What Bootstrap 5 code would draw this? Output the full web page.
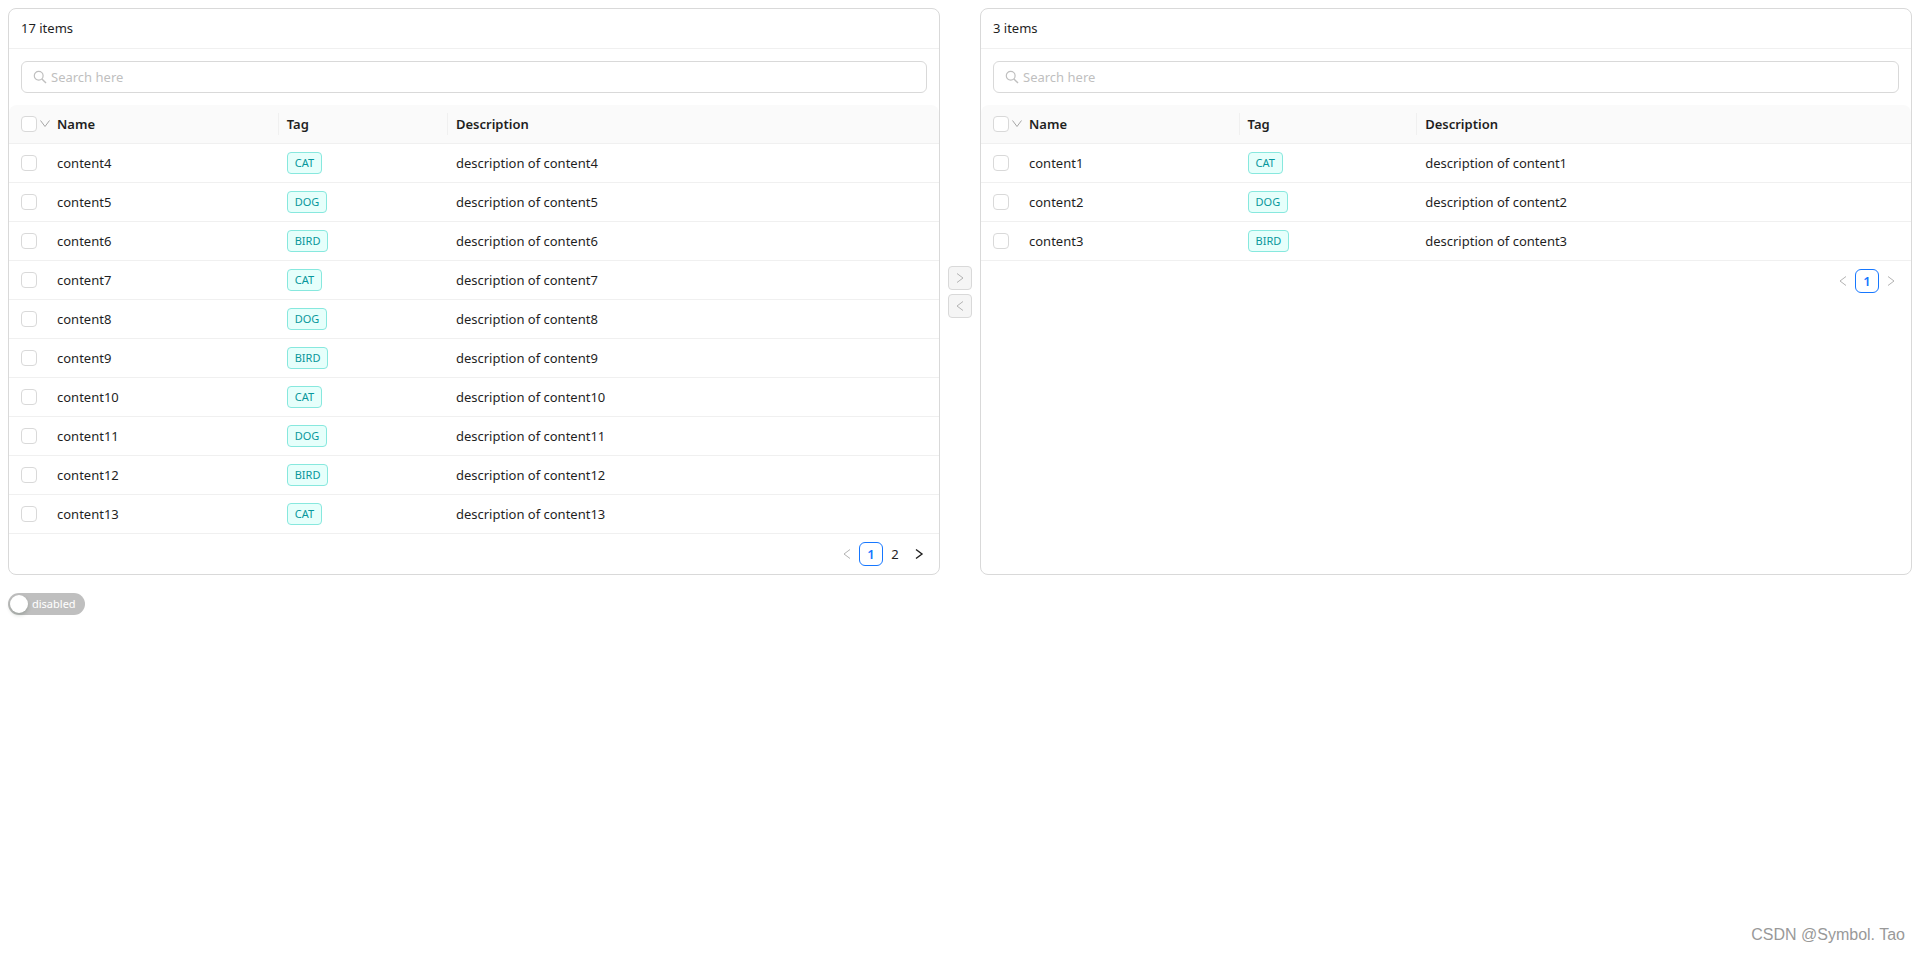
<!DOCTYPE html>
<html lang="en">
<head>
<meta charset="utf-8">
<meta name="viewport" content="width=device-width, initial-scale=1">
<title>Table transfer</title>
<link href="https://cdn.jsdelivr.net/npm/bootstrap@5.3.0/dist/css/bootstrap.min.css" rel="stylesheet">
<style>
  body { font-family: "Noto Sans", "Open Sans", sans-serif; font-size: 13px; line-height: 22px; color: #1f1f1f; background: #fff; }
  .panel { border: 1px solid #d9d9d9; border-radius: 8px; flex: 1 1 0; min-width: 0; }
  .panel-head { padding: 8px 12px 9px; border-bottom: 1px solid #f0f0f0; }
  .search { height: 32px; margin: 12px; padding: 0 11px; gap: 4px; border: 1px solid #d9d9d9; border-radius: 6px; color: #bfbfbf; }
  .search .form-control { font-size: 13px; line-height: 22px; box-shadow: none; background: transparent; }
  .search .form-control::placeholder { color: #bfbfbf; opacity: 1; }
  .items { table-layout: fixed; width: 100%; border-collapse: separate; border-spacing: 0; }
  .items th, .items td { height: 39px; padding: 0 8px; border-bottom: 1px solid #f0f0f0; vertical-align: middle; white-space: nowrap; }
  .items th { font-weight: 600; background: #fafafa; }
  .items th:first-child { border-top-left-radius: 8px; }
  .items th:last-child { border-top-right-radius: 8px; }
  .items th:first-child, .items td:first-child { padding: 0 0 0 12px; }
  .items .split { background: linear-gradient(#f0f0f0, #f0f0f0) right center / 1px 22px no-repeat #fafafa; }
  .col-pick { width: 40px; }
  .source .col-name { width: 24.7%; }
  .source .col-tag { width: 18.2%; }
  .target .col-name { width: 23.5%; }
  .target .col-tag { width: 19.1%; }
  .form-check-input.pick { display: block; flex: none; width: 16px; height: 16px; margin: 0; border: 1px solid #d9d9d9; border-radius: 4px; }
  .pick-all { gap: 3px; }
  .more { color: #a6a6a6; }
  .kind { display: block; width: fit-content; padding: 0 7px; font-size: 11px; line-height: 20px; color: #08979c; background: #e6fffb; border: 1px solid #87e8de; border-radius: 4px; }
  .pager .page-link { display: flex; align-items: center; justify-content: center; width: 24px; height: 24px; padding: 0; border: 1px solid transparent; border-radius: 6px; font-size: 13px; color: #1f1f1f; background: transparent; }
  .pager .page-item .page-link { margin-left: 0; }
  .pager .active .page-link { color: #1677ff; border-color: #1677ff; font-weight: 600; background: #fff; }
  .pager .disabled .page-link { color: #b3b3b3; }
  .move { width: 24px; height: 24px; padding: 0; border: 1px solid #d9d9d9; border-radius: 4px; }
  .move:disabled { opacity: 1; border-color: #d9d9d9; background: #f5f5f5; color: #b3b3b3; }
  .switch-row { margin-top: 18px; }
  .toggle { height: 22px; padding: 0 9px 0 2px; gap: 4px; border: 0; border-radius: 11px; background: #bfbfbf; color: #fff; font-size: 11px; line-height: 22px; }
  .knob { width: 18px; height: 18px; border-radius: 50%; background: #fff; box-shadow: 0 2px 4px rgba(0, 35, 11, .2); }
  .credit { padding-right: 7px; font: 16px/20px "Liberation Sans", sans-serif; color: #999; }
  svg { display: block; flex: none; fill: none; stroke: currentColor; }
</style>
</head>
<body class="d-flex flex-column min-vh-100 p-2">
<svg width="0" height="0" class="position-absolute" aria-hidden="true">
  <symbol id="i-search" viewBox="0 0 14 14"><circle cx="5.7" cy="5.7" r="4.4" stroke-width="1.2"/><path d="M8.9 8.9 13 13" stroke-width="1.4"/></symbol>
  <symbol id="i-down" viewBox="0 0 10 10"><path d="M.5 1.5 5 7.500 9.500 1.500"/></symbol>
  <symbol id="i-left" viewBox="0 0 12 12"><path d="M9 1.500 3 6l6 4.500"/></symbol>
  <symbol id="i-right" viewBox="0 0 12 12"><path d="M3 1.500 9 6l-6 4.500"/></symbol>
</svg>

<main class="d-flex align-items-stretch">
  <section class="panel source">
    <div class="panel-head">17 items</div>
    <div class="search d-flex align-items-center">
      <svg width="14" height="14"><use href="#i-search"/></svg>
      <input class="form-control border-0 p-0" type="text" placeholder="Search here" aria-label="Search source items">
    </div>
    <table class="items">
      <colgroup><col class="col-pick"><col class="col-name"><col class="col-tag"><col></colgroup>
      <thead>
        <tr>
          <th scope="col"><div class="pick-all d-flex align-items-center"><input class="form-check-input pick" type="checkbox" aria-label="Select all source items"><svg class="more" width="10" height="12"><use href="#i-down"/></svg></div></th>
          <th scope="col" class="split">Name</th><th scope="col" class="split">Tag</th><th scope="col">Description</th>
        </tr>
      </thead>
      <tbody>
        <tr><td><input class="form-check-input pick" type="checkbox" aria-label="content4"></td><td>content4</td><td><span class="kind">CAT</span></td><td>description of content4</td></tr>
        <tr><td><input class="form-check-input pick" type="checkbox" aria-label="content5"></td><td>content5</td><td><span class="kind">DOG</span></td><td>description of content5</td></tr>
        <tr><td><input class="form-check-input pick" type="checkbox" aria-label="content6"></td><td>content6</td><td><span class="kind">BIRD</span></td><td>description of content6</td></tr>
        <tr><td><input class="form-check-input pick" type="checkbox" aria-label="content7"></td><td>content7</td><td><span class="kind">CAT</span></td><td>description of content7</td></tr>
        <tr><td><input class="form-check-input pick" type="checkbox" aria-label="content8"></td><td>content8</td><td><span class="kind">DOG</span></td><td>description of content8</td></tr>
        <tr><td><input class="form-check-input pick" type="checkbox" aria-label="content9"></td><td>content9</td><td><span class="kind">BIRD</span></td><td>description of content9</td></tr>
        <tr><td><input class="form-check-input pick" type="checkbox" aria-label="content10"></td><td>content10</td><td><span class="kind">CAT</span></td><td>description of content10</td></tr>
        <tr><td><input class="form-check-input pick" type="checkbox" aria-label="content11"></td><td>content11</td><td><span class="kind">DOG</span></td><td>description of content11</td></tr>
        <tr><td><input class="form-check-input pick" type="checkbox" aria-label="content12"></td><td>content12</td><td><span class="kind">BIRD</span></td><td>description of content12</td></tr>
        <tr><td><input class="form-check-input pick" type="checkbox" aria-label="content13"></td><td>content13</td><td><span class="kind">CAT</span></td><td>description of content13</td></tr>
      </tbody>
    </table>
    <nav class="pager" aria-label="Source pages">
      <ul class="pagination justify-content-end m-2">
        <li class="page-item disabled"><a class="page-link" href="#" aria-label="Previous"><svg width="12" height="12"><use href="#i-left"/></svg></a></li>
        <li class="page-item active"><a class="page-link" href="#">1</a></li>
        <li class="page-item"><a class="page-link" href="#">2</a></li>
        <li class="page-item"><a class="page-link" href="#" aria-label="Next"><svg width="12" height="12" stroke-width="1.4"><use href="#i-right"/></svg></a></li>
      </ul>
    </nav>
  </section>

  <div class="d-flex flex-column align-self-center gap-1 mx-2">
    <button class="btn move d-flex align-items-center justify-content-center" type="button" disabled aria-label="Move to target"><svg width="12" height="12"><use href="#i-right"/></svg></button>
    <button class="btn move d-flex align-items-center justify-content-center" type="button" disabled aria-label="Move to source"><svg width="12" height="12"><use href="#i-left"/></svg></button>
  </div>

  <section class="panel target">
    <div class="panel-head">3 items</div>
    <div class="search d-flex align-items-center">
      <svg width="14" height="14"><use href="#i-search"/></svg>
      <input class="form-control border-0 p-0" type="text" placeholder="Search here" aria-label="Search target items">
    </div>
    <table class="items">
      <colgroup><col class="col-pick"><col class="col-name"><col class="col-tag"><col></colgroup>
      <thead>
        <tr>
          <th scope="col"><div class="pick-all d-flex align-items-center"><input class="form-check-input pick" type="checkbox" aria-label="Select all target items"><svg class="more" width="10" height="12"><use href="#i-down"/></svg></div></th>
          <th scope="col" class="split">Name</th><th scope="col" class="split">Tag</th><th scope="col">Description</th>
        </tr>
      </thead>
      <tbody>
        <tr><td><input class="form-check-input pick" type="checkbox" aria-label="content1"></td><td>content1</td><td><span class="kind">CAT</span></td><td>description of content1</td></tr>
        <tr><td><input class="form-check-input pick" type="checkbox" aria-label="content2"></td><td>content2</td><td><span class="kind">DOG</span></td><td>description of content2</td></tr>
        <tr><td><input class="form-check-input pick" type="checkbox" aria-label="content3"></td><td>content3</td><td><span class="kind">BIRD</span></td><td>description of content3</td></tr>
      </tbody>
    </table>
    <nav class="pager" aria-label="Target pages">
      <ul class="pagination justify-content-end m-2">
        <li class="page-item disabled"><a class="page-link" href="#" aria-label="Previous"><svg width="12" height="12"><use href="#i-left"/></svg></a></li>
        <li class="page-item active"><a class="page-link" href="#">1</a></li>
        <li class="page-item disabled"><a class="page-link" href="#" aria-label="Next"><svg width="12" height="12"><use href="#i-right"/></svg></a></li>
      </ul>
    </nav>
  </section>
</main>

<div class="switch-row d-flex">
  <button class="toggle d-flex align-items-center" type="button" role="switch" aria-checked="false"><span class="knob"></span>disabled</button>
</div>

<footer class="credit mt-auto text-end">CSDN @Symbol. Tao</footer>
<script src="https://cdn.jsdelivr.net/npm/bootstrap@5.3.0/dist/js/bootstrap.bundle.min.js"></script>
</body>
</html>
